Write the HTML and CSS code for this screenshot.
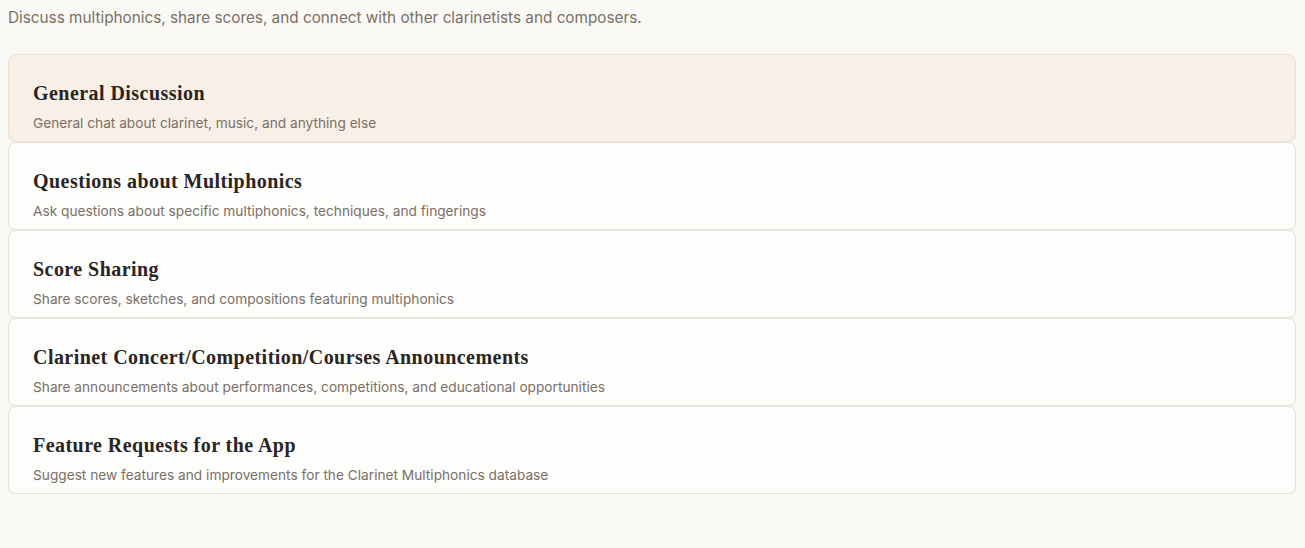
FILE: index.html
```html
<!DOCTYPE html>
<html lang="en">
<head>
<meta charset="utf-8">
<title>Forum</title>
<link rel="stylesheet" href="styles.css">
</head>
<body>
<main class="page">
  <p class="intro">Discuss multiphonics, share scores, and connect with other clarinetists and composers.</p>
  <ul class="categories">
    <li class="category is-active">
      <h2 class="category-title">General Discussion</h2>
      <p class="category-desc">General chat about clarinet, music, and anything else</p>
    </li>
    <li class="category">
      <h2 class="category-title">Questions about Multiphonics</h2>
      <p class="category-desc">Ask questions about specific multiphonics, techniques, and fingerings</p>
    </li>
    <li class="category">
      <h2 class="category-title">Score Sharing</h2>
      <p class="category-desc">Share scores, sketches, and compositions featuring multiphonics</p>
    </li>
    <li class="category">
      <h2 class="category-title">Clarinet Concert/Competition/Courses Announcements</h2>
      <p class="category-desc">Share announcements about performances, competitions, and educational opportunities</p>
    </li>
    <li class="category">
      <h2 class="category-title">Feature Requests for the App</h2>
      <p class="category-desc">Suggest new features and improvements for the Clarinet Multiphonics database</p>
    </li>
  </ul>
</main>
</body>
</html>
```
FILE: styles.css
```css
html, body {
  margin: 0;
  padding: 0;
  background: #fbf9f5;
}
body {
  font-family: Inter, "Noto Sans", sans-serif;
  color: #2a2522;
}
.page {
  padding: 8px 9px 0 8px;
}
.intro {
  margin: 0;
  font-size: 15.3px;
  line-height: 20px;
  color: #7a6f66;
}
.categories {
  list-style: none;
  margin: 26px 0 0 0;
  padding: 0;
  display: flex;
  flex-direction: column;
}
.category {
  box-sizing: border-box;
  height: 88px;
  padding: 25px 24px 0 24px;
  background: #fdfdfc;
  border: 1px solid #e8e2d9;
  border-radius: 8px;
  box-shadow: 0 1px 1px rgba(120, 100, 80, 0.06);
}
.category.is-active {
  background: #f8f0e6;
}
.category-title {
  margin: 0;
  font-family: "Liberation Serif", "DejaVu Serif", serif;
  font-weight: 700;
  font-size: 20px;
  line-height: 26px;
  letter-spacing: 0.45px;
  color: #2a2522;
}
.category-desc {
  margin: 8px 0 0 0;
  font-size: 13.7px;
  line-height: 18px;
  color: #7a6f66;
}
```
